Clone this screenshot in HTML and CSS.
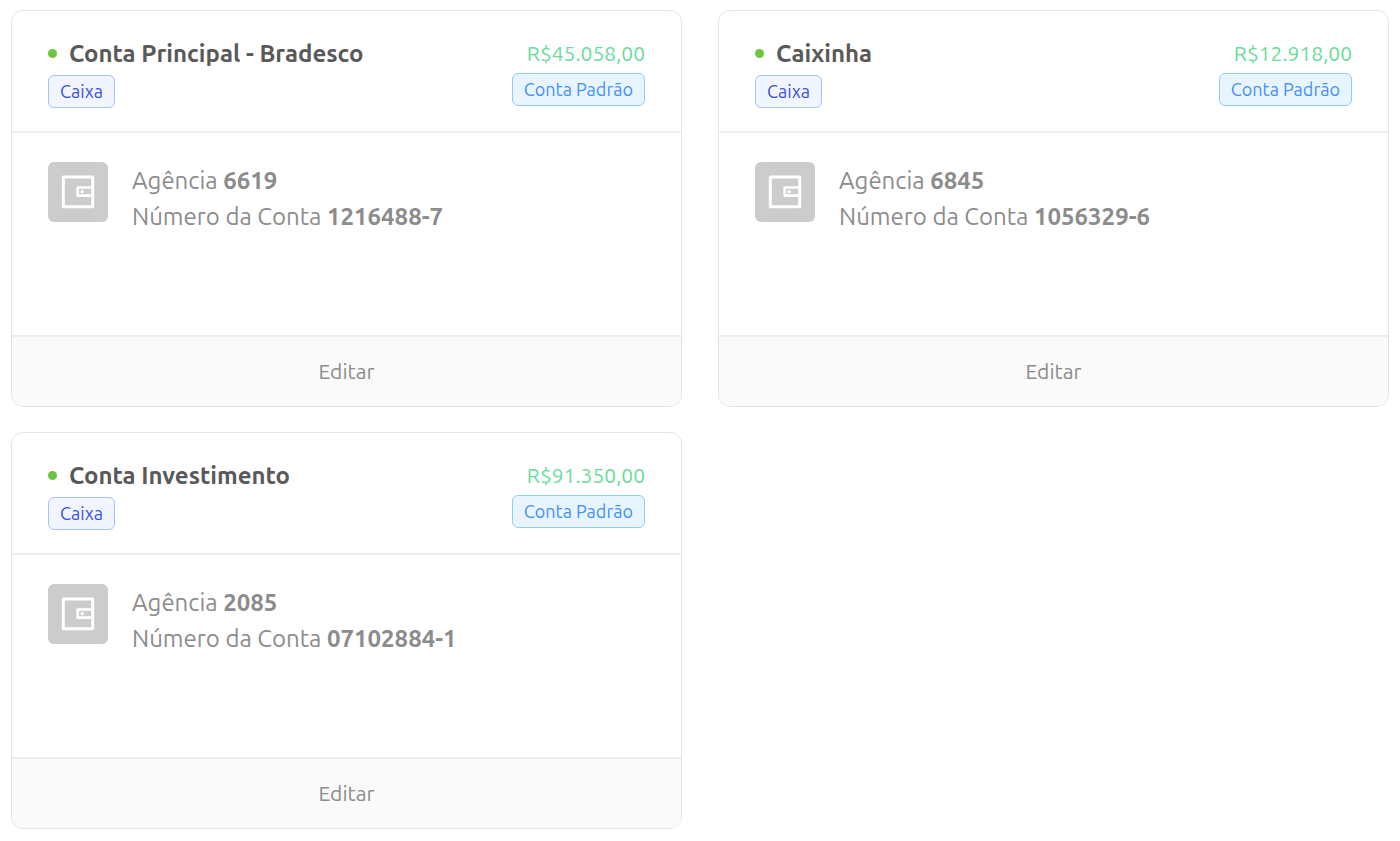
FILE: index.html
```html
<!DOCTYPE html>
<html lang="pt-BR">
<head>
<meta charset="utf-8">
<meta name="viewport" content="width=device-width, initial-scale=1">
<title>Contas</title>
<link rel="stylesheet" href="styles.css">
</head>
<body>
<svg class="sprite" aria-hidden="true">
  <symbol id="wallet" viewBox="0 0 60 60">
    <path d="M15.3 15.1H44.7V44.7H15.3Z" fill="none" stroke="#fff" stroke-width="3" stroke-linejoin="round"/>
    <path d="M44.7 25.5H29.7V33.7H44.7" fill="none" stroke="#fff" stroke-width="2.7" stroke-linejoin="round"/>
    <circle cx="34.2" cy="29.6" r="1.7" fill="#fff"/>
  </symbol>
</svg>
<main class="accounts">
  <article class="card">
    <header class="card-header">
      <div class="heading">
        <h2 class="title"><span class="dot"></span>Conta Principal - Bradesco</h2>
        <span class="tag tag-type">Caixa</span>
      </div>
      <div class="summary">
        <span class="balance">R$45.058,00</span>
        <span class="tag tag-default">Conta Padrão</span>
      </div>
    </header>
    <div class="card-body">
      <svg class="avatar" aria-hidden="true"><use href="#wallet"/></svg>
      <div class="details">
        <p>Agência <strong>6619</strong></p>
        <p>Número da Conta <strong>1216488-7</strong></p>
      </div>
    </div>
    <button class="edit" type="button">Editar</button>
  </article>
  <article class="card">
    <header class="card-header">
      <div class="heading">
        <h2 class="title"><span class="dot"></span>Caixinha</h2>
        <span class="tag tag-type">Caixa</span>
      </div>
      <div class="summary">
        <span class="balance">R$12.918,00</span>
        <span class="tag tag-default">Conta Padrão</span>
      </div>
    </header>
    <div class="card-body">
      <svg class="avatar" aria-hidden="true"><use href="#wallet"/></svg>
      <div class="details">
        <p>Agência <strong>6845</strong></p>
        <p>Número da Conta <strong>1056329-6</strong></p>
      </div>
    </div>
    <button class="edit" type="button">Editar</button>
  </article>
  <article class="card">
    <header class="card-header">
      <div class="heading">
        <h2 class="title"><span class="dot"></span>Conta Investimento</h2>
        <span class="tag tag-type">Caixa</span>
      </div>
      <div class="summary">
        <span class="balance">R$91.350,00</span>
        <span class="tag tag-default">Conta Padrão</span>
      </div>
    </header>
    <div class="card-body">
      <svg class="avatar" aria-hidden="true"><use href="#wallet"/></svg>
      <div class="details">
        <p>Agência <strong>2085</strong></p>
        <p>Número da Conta <strong>07102884-1</strong></p>
      </div>
    </div>
    <button class="edit" type="button">Editar</button>
  </article>
</main>
</body>
</html>
```
FILE: styles.css
```css
* { box-sizing: border-box; }

body {
  margin: 0;
  background: #fff;
  color: #8c8c8c;
  font-family: Ubuntu, "Noto Sans", sans-serif;
}

.sprite { position: absolute; width: 0; height: 0; }

.accounts {
  display: grid;
  grid-template-columns: repeat(2, minmax(0, 1fr));
  gap: 25px 36px;
  padding: 10px 11px 12px;
}

.card {
  display: flex;
  flex-direction: column;
  border: 1px solid #e4e4e4;
  border-radius: 12px;
  overflow: hidden;
}

.card-header {
  display: flex;
  justify-content: space-between;
  align-items: flex-start;
  padding: 26px 36px 23px;
  border-bottom: 2px solid #eee;
}

.heading, .summary {
  display: flex;
  flex-direction: column;
}

.heading { align-items: flex-start; gap: 5px; }
.summary { align-items: flex-end; gap: 3px; }

.title {
  display: flex;
  align-items: center;
  gap: 12px;
  margin: 0;
  color: #595959;
  font-size: 24px;
  font-weight: 700;
  line-height: 33px;
}

.dot {
  width: 9px;
  height: 9px;
  border-radius: 50%;
  background: #6fc53e;
}

.balance {
  color: #69dc9b;
  font-size: 21px;
  line-height: 33px;
}

.tag {
  padding: 0 11px;
  border: 1px solid;
  border-radius: 6px;
  font-size: 18px;
  line-height: 31px;
}

.tag-type { background: #f0f5ff; border-color: #a6c1ff; color: #3c50e0; }
.tag-default { background: #e8f5ff; border-color: #90ccff; color: #4490f8; }

.card-body {
  display: flex;
  gap: 24px;
  min-height: 202px;
  padding: 29px 36px;
}

.avatar {
  flex: none;
  width: 60px;
  height: 60px;
  border-radius: 6px;
  background: #ccc;
}

.details { padding-top: 1px; font-size: 24px; line-height: 36px; }
.details p { margin: 0; }

.edit {
  padding: 0;
  border: 0;
  border-top: 2px solid #eee;
  background: #fafafa;
  color: #8c8c8c;
  font-family: inherit;
  font-size: 21px;
  line-height: 69px;
  cursor: pointer;
}
```
